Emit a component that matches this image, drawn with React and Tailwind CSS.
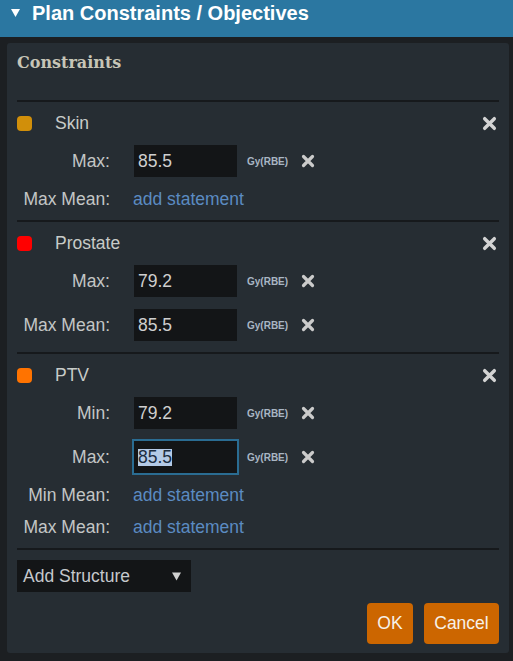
import React from "react";

const groups = [
  {
    name: "Skin",
    color: "#d18f0a",
    rows: [
      { label: "Max:", value: "85.5" },
      { label: "Max Mean:", link: true },
    ],
  },
  {
    name: "Prostate",
    color: "#ff0000",
    rows: [
      { label: "Max:", value: "79.2" },
      { label: "Max Mean:", value: "85.5" },
    ],
  },
  {
    name: "PTV",
    color: "#ff7300",
    rows: [
      { label: "Min:", value: "79.2" },
      { label: "Max:", value: "85.5", focused: true },
      { label: "Min Mean:", link: true },
      { label: "Max Mean:", link: true },
    ],
  },
];

function XIcon({ className }) {
  return (
    <svg viewBox="0 0 14 14" className={className} aria-hidden="true">
      <path
        d="M2.5 2.5 L11.5 11.5 M11.5 2.5 L2.5 11.5"
        stroke="currentColor"
        strokeWidth="3.2"
        strokeLinecap="round"
        fill="none"
      />
    </svg>
  );
}

function Row({ row }) {
  if (row.link) {
    return (
      <div className="flex h-[32px] items-center">
        <div className="w-[93px] text-right text-[#c3c6c6]">{row.label}</div>
        <a className="ml-[23px] text-[#5b8bc2] cursor-pointer">add statement</a>
      </div>
    );
  }
  return (
    <div className="flex h-[44px] items-center">
      <div className="w-[93px] text-right text-[#c3c6c6]">{row.label}</div>
      <div
        className={
          "ml-[24px] flex h-[32px] w-[103px] items-center bg-[#131517] pl-[4px] text-[#cfcfcf] " +
          (row.focused ? "shadow-[0_0_0_2px_#2a6c92]" : "")
        }
      >
        {row.focused ? (
          <span className="bg-[#b4cae6] text-[#1b2c40] leading-[17px]">{row.value}</span>
        ) : (
          row.value
        )}
      </div>
      <span className="ml-[10px] text-[10px] font-bold text-[#a9b6c4]">Gy(RBE)</span>
      <XIcon className="ml-[13px] h-[14px] w-[14px] text-[#cbcbcb]" />
    </div>
  );
}

export default function App() {
  return (
    <div className="min-h-[661px] w-[513px] bg-[#1c1f22] font-['Liberation_Sans',Arial,sans-serif] text-[17.5px]">
      <div className="flex h-[37px] items-start bg-[#2b77a1] pt-[2px] pl-[11px]">
        <svg viewBox="0 0 9 8" className="mt-[7px] h-[8px] w-[9px]" aria-hidden="true">
          <polygon points="0,0 9,0 4.5,8" fill="#ffffff" />
        </svg>
        <span className="ml-[12px] text-[20px] font-bold leading-[22px] text-white">
          Plan Constraints / Objectives
        </span>
      </div>
      <div className="ml-[7px] mr-[4px] mt-[6px] rounded-[3px] bg-[#262d33] px-[10px] pt-[8px] pb-[9px]">
        <div className="h-[24px] font-['DejaVu_Serif',serif] text-[16px] font-bold leading-[24px] text-[#c7c5b7]">
          Constraints
        </div>
        <div className="mt-[25px] border-b-2 border-[#16191c]">
          {groups.map((g) => (
            <div key={g.name} className="border-t-2 border-[#16191c] py-[5px]">
              <div className="flex h-[32px] items-center">
                <span
                  className="h-[15px] w-[15px] rounded-[4px]"
                  style={{ backgroundColor: g.color }}
                />
                <span className="ml-[23px] text-[#c8cbc8]">{g.name}</span>
                <XIcon className="ml-auto mr-[2px] h-[15px] w-[15px] text-[#d3d3d3]" />
              </div>
              {g.rows.map((r) => (
                <Row key={r.label} row={r} />
              ))}
            </div>
          ))}
        </div>
        <div className="mt-[10px] flex h-[32px] w-[174px] items-center bg-[#131517] pl-[6px] pr-[10px] text-[#c5c8cc]">
          <span>Add Structure</span>
          <svg viewBox="0 0 9 9" className="ml-auto h-[9px] w-[9px]" aria-hidden="true">
            <polygon points="0,0.5 9,0.5 4.5,8.5" fill="#d0d0d0" />
          </svg>
        </div>
        <div className="mt-[11px] flex justify-end gap-[11px]">
          <button className="h-[41px] w-[46px] rounded-[4px] bg-[#cc6600] text-[#f7f1e8]">OK</button>
          <button className="h-[41px] w-[75px] rounded-[4px] bg-[#cc6600] text-[#f7f1e8]">Cancel</button>
        </div>
      </div>
    </div>
  );
}
